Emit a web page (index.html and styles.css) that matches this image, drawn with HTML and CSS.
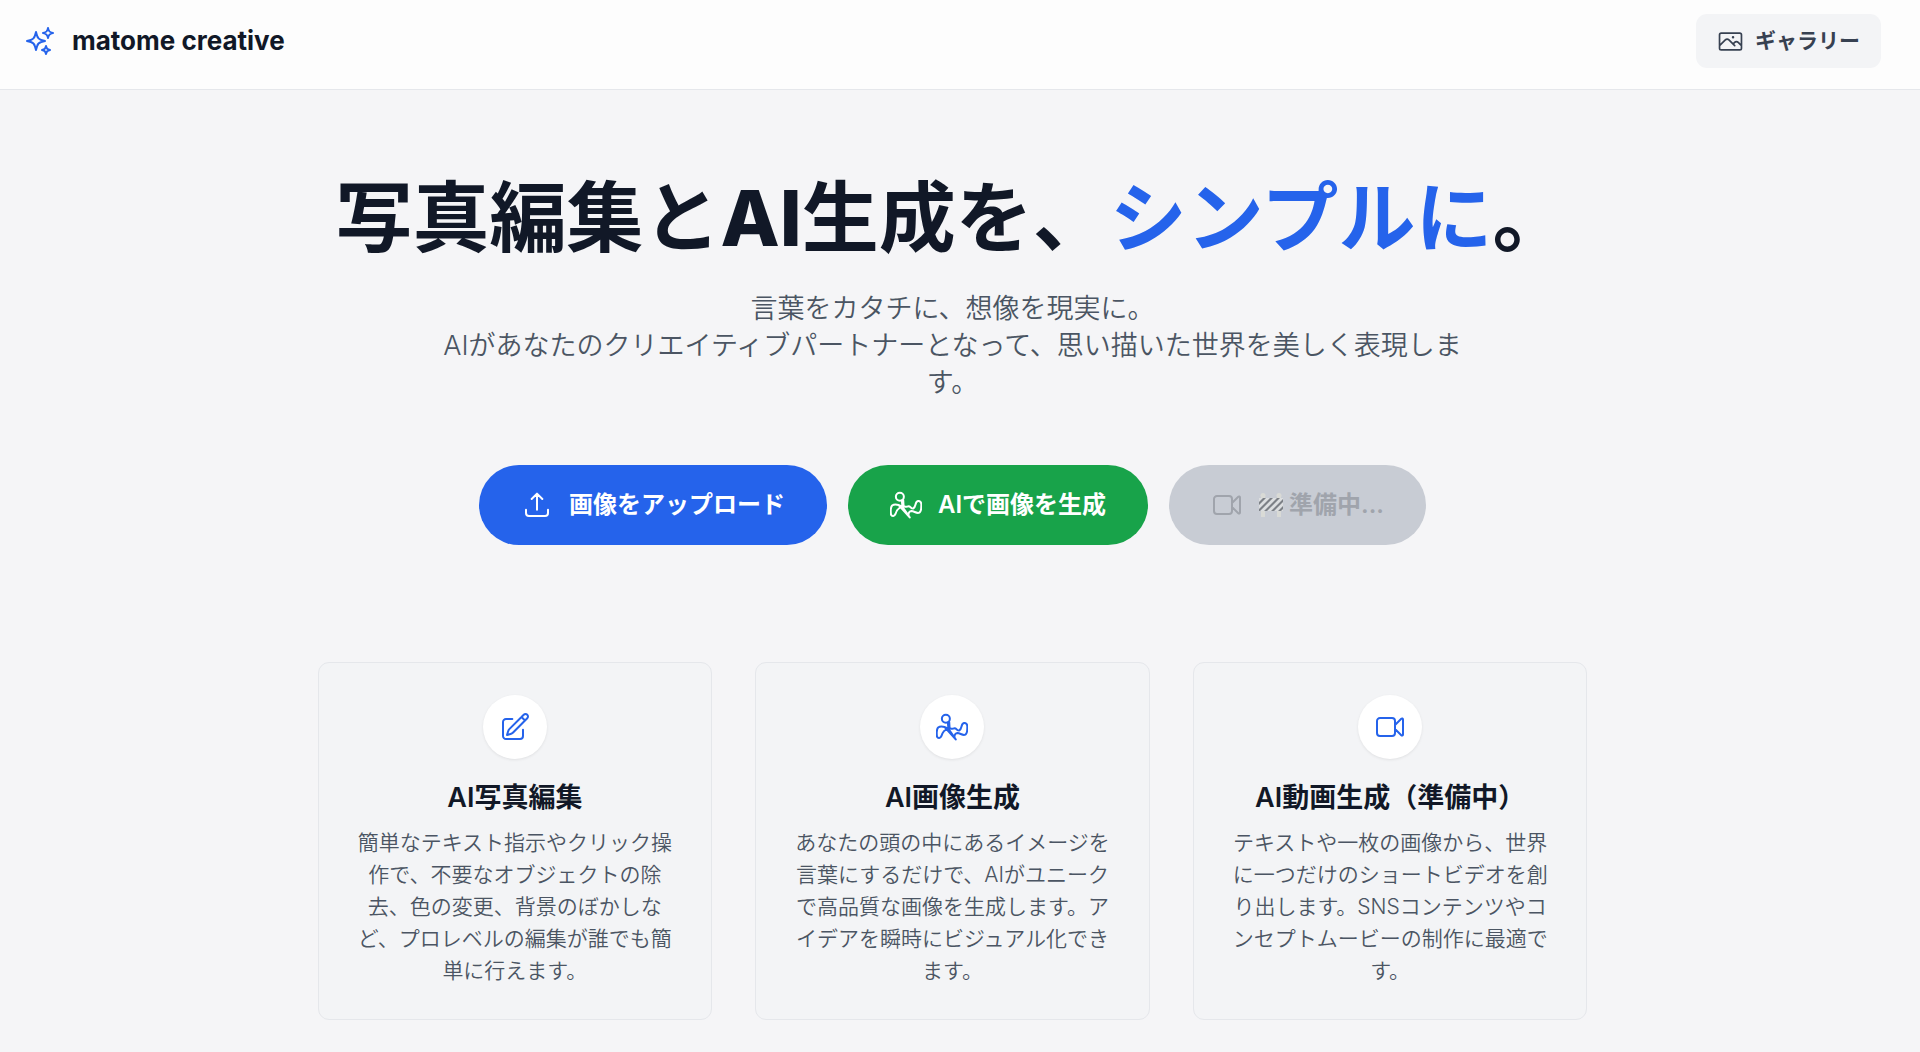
FILE: index.html
```html
<!DOCTYPE html>
<html lang="ja">
<head>
<meta charset="utf-8">
<meta name="viewport" content="width=device-width, initial-scale=1">
<title>matome creative</title>
<link rel="stylesheet" href="styles.css">
</head>
<body>
<svg class="sprite" aria-hidden="true">
  <symbol id="i-sparkles" viewBox="0 0 24 24"><path d="M9.813 15.904 9 18.75l-.813-2.846a4.5 4.5 0 0 0-3.09-3.09L2.25 12l2.846-.813a4.5 4.5 0 0 0 3.09-3.09L9 5.25l.813 2.846a4.5 4.5 0 0 0 3.09 3.09L15.75 12l-2.846.813a4.5 4.5 0 0 0-3.09 3.09ZM18.259 8.715 18 9.75l-.259-1.035a3.375 3.375 0 0 0-2.455-2.456L14.25 6l1.036-.259a3.375 3.375 0 0 0 2.455-2.456L18 2.25l.259 1.035a3.375 3.375 0 0 0 2.456 2.456L21.75 6l-1.035.259a3.375 3.375 0 0 0-2.456 2.456ZM16.894 20.567 16.5 21.75l-.394-1.183a2.25 2.25 0 0 0-1.423-1.423L13.5 18.75l1.183-.394a2.25 2.25 0 0 0 1.423-1.423l.394-1.183.394 1.183a2.25 2.25 0 0 0 1.423 1.423l1.183.394-1.183.394a2.25 2.25 0 0 0-1.423 1.423Z"/></symbol>
  <symbol id="i-photo" viewBox="0 0 24 24"><path d="m2.25 15.75 5.159-5.159a2.25 2.25 0 0 1 3.182 0l5.159 5.159m-1.5-1.5 1.409-1.409a2.25 2.25 0 0 1 3.182 0l2.909 2.909m-18 3.75h16.5a1.5 1.5 0 0 0 1.5-1.5V6a1.5 1.5 0 0 0-1.5-1.5H3.75A1.5 1.5 0 0 0 2.25 6v12a1.5 1.5 0 0 0 1.5 1.5Zm10.5-11.25h.008v.008h-.008V8.25Zm.375 0a.375.375 0 1 1-.75 0 .375.375 0 0 1 .75 0Z"/></symbol>
  <symbol id="i-upload" viewBox="0 0 24 24"><path d="M3.750 15.500v2.500A2.250 2.250 0 0 0 6 20.250h12A2.250 2.250 0 0 0 20.250 18v-2.500M8 7.500 12 3.500l4 4M12 3.500v12"/></symbol>
  <symbol id="i-sketch" viewBox="0 0 24 24"><circle cx="7.400" cy="5.800" r="3"/><path d="M8.900 8.600 9.300 13.200M9.900 8.200 10.200 13M9.200 13.200C6.500 11.800 3.500 11 1.600 12.400.2 13.800.5 18 .8 19.300c.6 1.300 2.700 1.200 3.300-.6C4.800 16.200 6.500 14 9.200 13.200l5.600 8.100-1-1.700c.1-2 .8-3 2.300-3.100 2 .2 3.500 1.700 5.300 1.400 2.400-.6 1.900-2.900 2.100-5.900.1-2-1-3.200-2.500-3-2.500.6-1.200 4.200-3.500 5.600-1.800.3-2.200-2.100-4-1.500-1.200.6-2 .2-3.500-.1M6.800 12.400l8 8.900"/></symbol>
  <symbol id="i-video" viewBox="0 0 24 24"><path d="m15.750 10.500 4.720-4.720a.75.75 0 0 1 1.280.53v11.380a.75.75 0 0 1-1.280.53l-4.720-4.720M4.500 18.750h9a2.250 2.250 0 0 0 2.250-2.250v-9a2.250 2.250 0 0 0-2.250-2.250h-9A2.250 2.250 0 0 0 2.250 7.500v9a2.250 2.250 0 0 0 2.250 2.250Z"/></symbol>
  <symbol id="i-edit" viewBox="0 0 24 24"><path d="m16.862 4.487 1.687-1.688a1.875 1.875 0 1 1 2.652 2.652L10.582 16.070a4.500 4.500 0 0 1-1.897 1.130L6 18l.8-2.685a4.500 4.500 0 0 1 1.130-1.897l8.932-8.931Zm0 0L19.500 7.125M18 14v4.750A2.250 2.250 0 0 1 15.750 21H5.250A2.250 2.250 0 0 1 3 18.750V8.250A2.250 2.250 0 0 1 5.250 6H10"/></symbol>
</svg>

<header class="site-header">
  <div class="brand">
    <svg class="icon" aria-hidden="true"><use href="#i-sparkles"/></svg>
    <span class="brand-name">matome creative</span>
  </div>
  <button class="gallery" type="button">
    <svg class="icon icon-small" aria-hidden="true"><use href="#i-photo"/></svg>
    <span>ギャラリー</span>
  </button>
</header>

<main class="page">
  <h1 class="title">写真編集と<span class="latin">AI</span>生成を、<span class="accent">シンプルに</span>。</h1>
  <p class="lead">言葉をカタチに、想像を現実に。<br>AIがあなたのクリエイティブパートナーとなって、思い描いた世界を美しく表現します。</p>

  <div class="actions">
    <button class="action action-upload" type="button">
      <svg class="icon" aria-hidden="true"><use href="#i-upload"/></svg>
      <span>画像をアップロード</span>
    </button>
    <button class="action action-generate" type="button">
      <svg class="icon" aria-hidden="true"><use href="#i-sketch"/></svg>
      <span>AIで画像を生成</span>
    </button>
    <button class="action action-soon" type="button" disabled>
      <svg class="icon" aria-hidden="true"><use href="#i-video"/></svg>
      <span class="soon-label">
        <svg class="barrier" viewBox="0 0 24 24" aria-hidden="true">
          <path class="post" d="M2 4h4v20H2zM18 4h4v20h-4z"/>
          <circle class="post" cx="4" cy="2.500" r="2.500"/><circle class="post" cx="20" cy="2.500" r="2.500"/>
          <path class="board" d="M0 5h24v13H0z"/>
          <path class="stripe" d="M0 9 4 5h3L0 12zM0 16 11 5h3L1 18H0zM5 18 18 5h3L8 18zM12 18 24 6v3l-9 9zM19 18l5-5v3l-2 2z"/>
        </svg>
        <span>準備中...</span>
      </span>
    </button>
  </div>

  <section class="features">
    <article class="card">
      <div class="badge"><svg class="icon" aria-hidden="true"><use href="#i-edit"/></svg></div>
      <h2 class="card-title">AI写真編集</h2>
      <p class="card-text">簡単なテキスト指示やクリック操作で、不要なオブジェクトの除去、色の変更、背景のぼかしなど、プロレベルの編集が誰でも簡単に行えます。</p>
    </article>
    <article class="card">
      <div class="badge"><svg class="icon" aria-hidden="true"><use href="#i-sketch"/></svg></div>
      <h2 class="card-title">AI画像生成</h2>
      <p class="card-text">あなたの頭の中にあるイメージを言葉にするだけで、AIがユニークで高品質な画像を生成します。アイデアを瞬時にビジュアル化できます。</p>
    </article>
    <article class="card">
      <div class="badge"><svg class="icon" aria-hidden="true"><use href="#i-video"/></svg></div>
      <h2 class="card-title">AI動画生成（準備中）</h2>
      <p class="card-text">テキストや一枚の画像から、世界に一つだけのショートビデオを創り出します。SNSコンテンツやコンセプトムービーの制作に最適です。</p>
    </article>
  </section>
</main>
</body>
</html>
```
FILE: styles.css
```css
:root {
  --blue: #2563eb;
  --ink: #111827;
  --muted: #4b5563;
  --panel: #f3f4f6;
  --line: #e5e7eb;
  --gutter: 15px;
}

* {
  box-sizing: border-box;
}

body {
  margin: 0;
  background: #f5f5f7;
  color: var(--ink);
  font-family: Inter, "Noto Sans CJK JP", sans-serif;
}

h1, h2, p {
  margin: 0;
}

button {
  border: 0;
  font-family: inherit;
}

.sprite {
  display: none;
}

.icon {
  flex: none;
  width: 32px;
  height: 32px;
  fill: none;
  stroke: currentColor;
  stroke-width: 1.5;
  stroke-linecap: round;
  stroke-linejoin: round;
  overflow: visible;
}

.icon-small {
  width: 27px;
  height: 27px;
}

.site-header {
  display: flex;
  align-items: center;
  justify-content: space-between;
  padding: 14px calc(24px + var(--gutter)) 21px 24px;
  background: #fdfdfd;
  border-bottom: 1px solid var(--line);
}

.brand {
  display: flex;
  align-items: center;
  gap: 16px;
}

.brand .icon {
  color: var(--blue);
}

.brand-name {
  font-size: 26px;
  line-height: 36px;
  font-weight: 700;
}

.gallery {
  display: flex;
  align-items: center;
  gap: 11px;
  padding: 11px 21px;
  border-radius: 11px;
  background: var(--panel);
  color: #374151;
  font-size: 21px;
  line-height: 32px;
  font-weight: 600;
}

.page {
  display: flex;
  flex-direction: column;
  align-items: center;
  padding: 88px calc(24px + var(--gutter)) 31px 24px;
  text-align: center;
}

.title {
  font-size: 77px;
  line-height: 80px;
  font-weight: 700;
}

.latin {
  font-weight: 800;
}

.accent {
  color: var(--blue);
}

.lead {
  max-width: 1040px;
  margin-top: 32px;
  color: var(--muted);
  font-size: 27px;
  line-height: 37px;
  font-weight: 350;
}

.actions {
  display: flex;
  flex-wrap: wrap;
  justify-content: center;
  gap: 21px;
  margin-top: 64px;
}

.action {
  display: flex;
  align-items: center;
  gap: 16px;
  padding: 24px 42px;
  border-radius: 40px;
  color: #fff;
  font-size: 24px;
  line-height: 32px;
  font-weight: 600;
}

.action-upload {
  background: var(--blue);
}

.action-generate {
  background: #18a34a;
}

.action-soon {
  background: #c8ccd4;
  color: #a0a4ac;
}

.soon-label {
  display: flex;
  align-items: center;
  gap: 6px;
}

.barrier {
  width: 24px;
  height: 24px;
}

.post {
  fill: #d9dad6;
}

.board {
  fill: #dcdee0;
}

.stripe {
  fill: #7c8086;
}

.features {
  display: grid;
  grid-template-columns: repeat(3, 1fr);
  gap: 43px;
  width: 100%;
  max-width: 1270px;
  margin-top: 117px;
}

.card {
  display: flex;
  flex-direction: column;
  align-items: center;
  padding: 32px;
  border: 1px solid var(--line);
  border-radius: 11px;
  background: var(--panel);
}

.badge {
  display: grid;
  place-items: center;
  width: 64px;
  height: 64px;
  border-radius: 50%;
  background: #fff;
  color: var(--blue);
  box-shadow: 0 1px 3px rgb(0 0 0 / 8%);
}

.card-title {
  margin-top: 21px;
  font-size: 27px;
  line-height: 36px;
  font-weight: 600;
}

.card-text {
  margin-top: 11px;
  color: var(--muted);
  font-size: 21px;
  line-height: 32px;
  font-weight: 350;
}

@media (max-width: 1000px) {
  .title {
    font-size: 48px;
    line-height: 64px;
  }

  .features {
    grid-template-columns: 1fr;
  }
}
```
